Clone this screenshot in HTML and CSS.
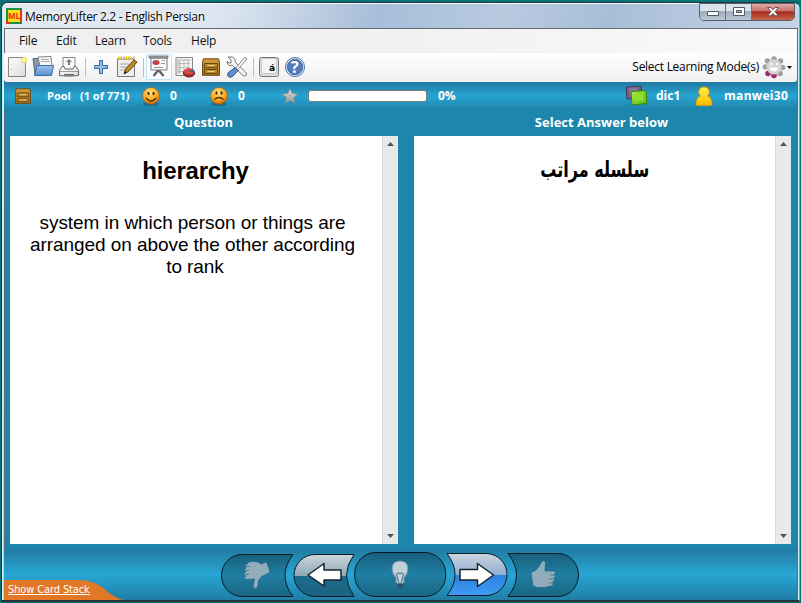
FILE: index.html
```html
<!DOCTYPE html>
<html lang="en">
<head>
<meta charset="utf-8">
<title>MemoryLifter 2.2 - English Persian</title>
<link rel="stylesheet" href="styles.css">
</head>
<body>
<svg class="defs" width="0" height="0">
<defs>
<linearGradient id="paper" x2="1" y2="1"><stop stop-color="#fff"/><stop offset="1" stop-color="#dcdcdc"/></linearGradient>
<linearGradient id="folder" x2="0" y2="1"><stop stop-color="#9cc4ec"/><stop offset="1" stop-color="#5b8fce"/></linearGradient>
<radialGradient id="face" cx=".45" cy=".3" r=".75"><stop stop-color="#ffe486"/><stop offset=".6" stop-color="#fba51c"/><stop offset="1" stop-color="#b84e00"/></radialGradient>
<linearGradient id="wood" x2="0" y2="1"><stop stop-color="#d39a3a"/><stop offset="1" stop-color="#b07816"/></linearGradient>
<linearGradient id="dark" x2="0" y2="1"><stop stop-color="#185f7d"/><stop offset=".5" stop-color="#1f7fa2"/><stop offset="1" stop-color="#1a6582"/></linearGradient>
<linearGradient id="back" x2="0" y2="1"><stop stop-color="#cdd5da"/><stop offset=".5" stop-color="#8fa9b7"/><stop offset=".51" stop-color="#1c6c8c"/><stop offset="1" stop-color="#1b6380"/></linearGradient>
<linearGradient id="fwd" x2="0" y2="1"><stop stop-color="#ccd5df"/><stop offset=".5" stop-color="#8faed4"/><stop offset=".51" stop-color="#2b80dc"/><stop offset="1" stop-color="#3f9cf5"/></linearGradient>
<linearGradient id="gold" x2="0" y2="1"><stop stop-color="#fff04a"/><stop offset="1" stop-color="#fcb900"/></linearGradient>
<linearGradient id="star" x2="0" y2="1"><stop stop-color="#ddd"/><stop offset="1" stop-color="#989898"/></linearGradient>
<linearGradient id="green" x2="1" y2="1"><stop stop-color="#b0ee40"/><stop offset="1" stop-color="#54b616"/></linearGradient>
<symbol id="drawer" viewBox="0 0 18 18"><path d="M1.500.8h15l1 3.500v13H.5v-13z" fill="url(#wood)" stroke="#684711"/><path d="M2.500 5.500h13v4.300h-13zM2.500 11.500h13v4h-13z" fill="#bd872b" stroke="#684711"/><path d="M6 6.500v1h6v-1M6 12.500v1h6v-1" fill="none" stroke="#e8cf7c" stroke-width="1"/></symbol>
</defs></svg>
<div class="window">
  <header class="titlebar">
    <svg class="logo" width="16" height="16"><path fill="#ef2b1b" d="M0 0h16v16H0z"/><path fill="#159447" d="M0 0h16v2H2v11H0zM3 14h12v2H3z"/><path fill="#ffdc18" d="M2 2h12v12H2z"/><text x="2" y="10.500" textLength="12" lengthAdjust="spacingAndGlyphs" class="logo-text">ML</text></svg>
    <span class="title">MemoryLifter 2.2 - English Persian</span>
    <div class="controls">
      <span class="min"><svg width="12" height="6"><path d="M.5.5h11v4H.5z" fill="#fff" stroke="#515961"/></svg></span>
      <span class="max"><svg width="12" height="10"><path d="M.5.5h11v8H.5z" fill="#fff" stroke="#515961"/><path d="M3.500 3.500h5v2h-5z" fill="#a4b0be" stroke="#515961"/></svg></span>
      <span class="close"><svg width="12" height="10"><path d="M.6.5h3.300L6 2.800 8.100.5h3.300L8 4.700l3.500 4.100H8.200L6 6.600 3.800 8.800H.5L4 4.700z" fill="#fff" stroke="#5b4446" stroke-width=".9"/></svg></span>
    </div>
  </header>
  <main class="client">
    <nav class="menu"><span class="m1">File</span><span class="m2">Edit</span><span class="m3">Learn</span><span class="m4">Tools</span><span class="m5">Help</span></nav>
    <div class="toolbar">
      <svg width="26" height="29" viewBox="4 53 26 29"><path d="M8.500 57.500h17v19h-17z" fill="url(#paper)" stroke="#858585"/><path d="M11 59v14" stroke="#bbb" stroke-dasharray="1 4"/><circle cx="24" cy="60" r="2.400" fill="#fffad5" stroke="#f4e55b" stroke-width="1.400"/></svg>
      <svg width="27" height="29" viewBox="30 53 27 29"><path d="M33 58.500h8l2 3h5v13H35z" fill="#8996a4" stroke="#5d6b79"/><path d="m38 57 13-.5 1 10H40z" fill="#f7f7f7" stroke="#858585"/><path d="M41 59.500h8M41 61.500h9" stroke="#aaa"/><path d="M37 65.500h16.500l-2 10H34.500z" fill="url(#folder)" stroke="#376eab"/></svg>
      <svg width="27" height="29" viewBox="57 53 27 29"><path d="M63 57.500h12v12H63z" fill="#fafafa" stroke="#888"/><path d="m69 59 3 3h-2v3h-2v-3h-2z" fill="#777"/><path d="m62 66.500-2.500 4v5q9 1.500 19 0v-5l-2.500-4h-2l-1 2.500h-8l-1-2.500z" fill="url(#paper)" stroke="#666"/><path d="M60 71.500h18" stroke="#999"/><path d="M64 74h10v1.500H64z" fill="#666"/></svg>
      <svg width="29" height="29" viewBox="84 53 29 29"><path d="M85.500 58v19" stroke="#bdbdbd"/><path d="M99.500 60.500h3v5h5v3h-5v5h-3v-5h-5v-3h5z" fill="#94bce5" stroke="#2f67a9"/></svg>
      <svg width="29" height="29" viewBox="113 53 29 29"><path d="M117.500 59h17v17.500h-17z" fill="#efeeea" stroke="#777"/><path d="M118 58h17" stroke="#e5bd17" stroke-width="3" stroke-dasharray="1.500 1"/><path d="M120 64h9M120 67h7M120 70h5" stroke="#aaa"/><path d="m124 74 1.500-5 8.500-9 3 2-8.500 9.500z" fill="#c48c20" stroke="#5e4217"/><path d="m124 74 1-3 2 1.500z" fill="#222"/></svg>
      <svg width="31" height="29" viewBox="142 53 31 29"><path d="M143.500 58v19" stroke="#bdbdbd"/><path d="M146.500 54.500h25v25h-25z" fill="#f9fcff" stroke="#bfe4fa"/><path d="m158.500 70-5 6M158.500 70l5 6" stroke="#606060" stroke-width="2.300"/><path d="M151 58h16v12h-16z" fill="#fafafa" stroke="#777"/><path d="M149 56h19v2h-19z" fill="#a9a9a9" stroke="#606060" stroke-width=".7"/><ellipse cx="156" cy="62.500" rx="3.500" ry="2.500" fill="#d53b35"/><path d="M156 62.500v-2.500q-3 0-4 2.500z" fill="#477bc0"/><path d="M162 60.500h3M161 63.500h4M154 67.500h9" stroke="#999"/></svg>
      <svg width="27" height="29" viewBox="173 53 27 29"><path d="M176 57.500h16.500v18H176z" fill="#f3f3f3" stroke="#898989"/><path d="M177 59h3v15h-3zM177 59h14v2h-14z" fill="#d2d2d2"/><path d="M180 60v13M184 60v13M188 60v13M178 63.500h12M178 67.500h12M178 71.500h12" stroke="#bbb"/><ellipse cx="189" cy="73" rx="5.700" ry="4" fill="#a52426" stroke="#69201e"/><ellipse cx="189" cy="71.500" rx="5.300" ry="3.200" fill="#d74b43"/><path d="m189 71.500 4-2.500q2 2 1 4z" fill="#386a98"/></svg>
      <svg width="25" height="29" viewBox="200 53 25 29"><use href="#drawer" x="202" y="57.500" width="18" height="19"/></svg>
      <svg width="27" height="29" viewBox="225 53 27 29"><path d="m228 57 3 3v3h-2l-2-2q0 4 3 5l2-1 10.500 10q2 2 3.500.5t-.5-3.500L235 62q1-4-3-5z" fill="#f6f6f6" stroke="#777"/><path d="m245 57 2 2-10 11-1.500-1.500z" fill="#fff" stroke="#858585"/><path d="m235 67.500 3 3-5.500 6q-2 1.500-4 0t0-4z" fill="#5c91cd" stroke="#244b80"/></svg>
      <svg width="30" height="29" viewBox="252 53 30 29"><path d="M253.500 58v19" stroke="#bdbdbd"/><rect x="259.500" y="57.500" width="19" height="19" rx="2" fill="#ddd" stroke="#777"/><rect x="261.500" y="58.500" width="15" height="15" rx="2" fill="#f5f5f3" stroke="#c5c5c5"/><text x="269" y="71" class="key">á</text></svg>
      <svg width="26" height="29" viewBox="282 53 26 29"><circle cx="295" cy="67" r="9.500" fill="#eef3fa" stroke="#456ba4"/><circle cx="295" cy="67" r="7.700" fill="#537cb9" stroke="#234f91" stroke-width=".7"/><text x="291" y="72.500" class="question-mark">?</text></svg>
      <span class="mode">Select Learning Mode(s)</span>
      <svg class="gear" width="34" height="29" viewBox="762 53 34 29"><g fill="#a2a0a2"><circle cx="774" cy="59" r="2.800"/><circle cx="780.500" cy="61" r="2.800"/><circle cx="782.500" cy="67.500" r="2.800"/><circle cx="780" cy="73.500" r="2.800"/><circle cx="767.500" cy="61" r="2.800"/><circle cx="765.500" cy="67" r="2.800"/></g><g fill="#a0286c"><circle cx="768" cy="73.500" r="2.800"/><circle cx="774" cy="75.500" r="2.800"/></g><circle cx="774" cy="67" r="7.500" fill="#d6d4d6"/><path d="M771.500 63v2M777 63v2" stroke="#fff" stroke-width="2"/><path d="M769.500 67.500h9q-1 4-4.500 4t-4.500-4" fill="#fff"/><path d="M787 66h5l-2.500 3z" fill="#111"/></svg>
    </div>
    <div class="status">
      <svg width="40" height="28" viewBox="4 82 40 28"><use href="#drawer" x="15" y="88" width="16" height="16"/></svg>
      <span class="pool">Pool</span><span class="count">(1 of 771)</span>
      <svg width="32" height="28" viewBox="138 82 32 28"><ellipse cx="151" cy="104" rx="8" ry="2" fill="#155875" opacity=".6"/><circle cx="151" cy="96" r="8.500" fill="url(#face)" stroke="#9b5315" stroke-width=".5"/><path d="M148.500 92v3M153.500 92v3" stroke="#3a2609" stroke-width="1.800"/><path d="M146 98q5 6 10 0" fill="none" stroke="#553006" stroke-width="1.500"/></svg>
      <span class="good">0</span>
      <svg width="32" height="28" viewBox="206 82 32 28"><ellipse cx="219" cy="104" rx="8" ry="2" fill="#155875" opacity=".6"/><circle cx="219" cy="96" r="8.500" fill="url(#face)" stroke="#9b5315" stroke-width=".5"/><path d="M216.500 91.500v3M221.500 91.500v3" stroke="#3a2609" stroke-width="1.800"/><path d="M214.500 99.500q4.500-4 9 0" fill="none" stroke="#553006" stroke-width="1.500"/></svg>
      <span class="bad">0</span>
      <svg width="26" height="28" viewBox="281 82 26 28"><path d="m290 88.500 2.200 4.800 5.500.6-4 3.700 1.100 5.500-4.800-2.600-4.800 2.600 1.100-5.500-4-3.700 5.500-.6z" fill="url(#star)" stroke="#858585" stroke-width=".7"/></svg>
      <div class="progress"></div><span class="percent">0%</span>
      <svg class="cards" width="26" height="28" viewBox="624 82 26 28"><path d="m626 87 15-1 1 12-15 1z" fill="#765b87" stroke="#403d51"/><path d="m629 88 9-.5.500 8-9 .5z" fill="#8a779b"/><path d="m631 91.500 15-1 1 13-15 1.500z" fill="url(#green)" stroke="#38820b"/><path d="m634 94 9-.5.500 7-9 .5z" fill="#8edf30"/></svg>
      <span class="deck">dic1</span>
      <svg width="24" height="28" viewBox="694 82 24 28"><path d="M700.500 96C697 92 699 87 704 87s7 5 3.500 9q4 1 4.500 8 0 1.500-1.500 1.500h-13q-1.500 0-1.500-1.500.500-7 4.500-8z" fill="url(#gold)" stroke="#ec9900"/></svg>
      <span class="user">manwei30</span>
    </div>
    <section class="workspace">
      <div class="column question"><h2><span>Question</span></h2><div class="panel"><article><h1><span>hierarchy</span></h1><p><span>system in which person or things are</span><span>arranged on above the other according</span><span>to rank</span></p></article><aside><svg width="7" height="4"><path d="M0 4h7L3.500 0z"/></svg><svg width="7" height="4"><path d="M0 0h7L3.500 4z"/></svg></aside></div></div>
      <div class="column answer"><h2><span>Select Answer below</span></h2><div class="panel"><article><div class="persian" lang="fa" dir="rtl"><span>سلسله مراتب</span></div></article><aside><svg width="7" height="4"><path d="M0 4h7L3.500 0z"/></svg><svg width="7" height="4"><path d="M0 0h7L3.500 4z"/></svg></aside></div></div>
    </section>
    <footer class="bottom">
      <div class="stack"><svg width="121" height="20"><path d="M0 0h75q13 0 23 7 13 12 22 13H0z" fill="#e07828"/></svg><a>Show Card Stack</a></div>
      <div class="navigation">
        <svg width="73" height="51" viewBox="221 549 73 51"><path d="M242 554.500h51q-16 21 0 42h-51a20.500 21 0 0 1 0-42z" fill="url(#dark)" stroke="#071c25"/><path d="M247.500 562.500q5-1.500 10-.5l4 2 5-2q2 5 3.500 10l-4 2.500-4.500 2-3 4-1 7q-3 2-4.500-.5l1.500-8-8 .5q-4-1-.5-3.500-3.500-1.500-.5-4-2.500-2 .5-4-2-2.500 1.500-4z" fill="#91adbc" stroke="#24647f" stroke-width=".7"/><path d="M246 566.500h4M245 570.500h4M246 574.500h3" stroke="#36718b" stroke-width=".8"/></svg>
        <svg width="61" height="51" viewBox="294 549 61 51"><path d="M315 554.500h39q-15 21 0 42h-39a21 21 0 0 1 0-42z" fill="url(#back)" stroke="#071c25"/><path d="m308 575 16-11.500v6.500h17v10h-17v6z" fill="#fff" stroke="#15252d" stroke-width="1.500" stroke-linejoin="round"/></svg>
        <svg width="92" height="51" viewBox="355 549 92 51"><rect x="354.700" y="552.500" width="91" height="44" rx="21" fill="url(#dark)" stroke="#051b23"/><path d="M396 583v-5q-4-5-4-9 0-8 8-8t8 8q0 4-4 9v5z" fill="#c0d1dc" stroke="#6b91a4"/><path d="m398.500 582-2-8q1-3 3.500 0 2.500-3 3.500 0l-2 8" fill="none" stroke="#41677a"/><path d="M397 584h6.500v2l-2 2h-2.500l-2-2z" fill="#315562"/></svg>
        <svg width="61" height="51" viewBox="447 549 61 51"><path d="M447 553.500h39a21 21 0 0 1 0 42h-39q16-21 0-42z" fill="url(#fwd)" stroke="#071c25"/><path d="m493.500 575-16-11.500v6h-17.500v10.500h17.500v6.500z" fill="#fff" stroke="#15252d" stroke-width="1.500" stroke-linejoin="round"/></svg>
        <svg width="73" height="51" viewBox="508 549 73 51"><path d="M508 553.500h50a20.500 21.500 0 0 1 0 43h-50q17-21.500 0-43z" fill="url(#dark)" stroke="#071c25"/><path d="M531 572q6 0 10.500-10 3-3 4 1l-.5 8h9q3 1.500 0 3.500 2.500 2 0 4 1.500 2-1.500 4 1.500 3-1.500 3.500l-7 1.500q-7 .5-11-1.500z" fill="#91adbc" stroke="#24647f" stroke-width=".7"/><path d="M550 575h4M549 579h4M549 583h3" stroke="#36718b" stroke-width=".8"/></svg>
      </div>
    </footer>
  </main>
</div>
</body>
</html>
```
FILE: styles.css
```css
* { box-sizing: border-box; }
body { margin: 0; width: 801px; height: 603px; overflow: hidden; padding: 2px 1px 1px; background: #087374; }
.defs { display: block; position: absolute; }
svg { display: block; flex: none; overflow: visible; }
span, a { white-space: nowrap; }
.window { height: 600px; padding: 0 2px 1px; border: 1px solid #26343f; border-right-color: #34bce1; border-bottom: 2px solid #24333e; border-radius: 7px 7px 1px 1px; background: linear-gradient(#e5f1fa, #a5d5ef); box-shadow: inset 0 0 0 1px #d5eafa; }
.titlebar { display: flex; height: 25px; margin: 0 -2px; padding: 5px 5px 0 4px; border-radius: 6px 6px 0 0; background: linear-gradient(100deg, #e3e9f0 0, #dce5ef 28%, #a7bdd9 47%, #b7cae0 63%, #a9bdd8 76%, #c4d5e6); box-shadow: inset 0 1px #f4faff; }
.logo-text { font: bold 8px "Open Sans", sans-serif; fill: #df3110; }
.title { margin-left: 3px; color: #080808; font: 12px/17px "Open Sans", sans-serif; letter-spacing: -.32px; text-shadow: 0 0 5px white; }
.controls { display: flex; width: 96px; height: 18px; margin: -5px -1px 0 auto; border: 1px solid #59626c; border-radius: 0 0 5px 5px; overflow: hidden; }
.controls span { display: flex; width: 26px; align-items: center; justify-content: center; border-right: 1px solid #687583; background: linear-gradient(#dae2eb 45%, #9eabba 47%, #b9c8d8); }
.controls .close { flex: 1; border: 0; background: linear-gradient(#dfaaa5, #c97068 45%, #a7291b 48%, #c7664b); }
.min svg { margin-top: 4px; }
.client { width: 794px; height: 572px; border: 1px solid #626b74; border-bottom-color: #546977; background: #1d86ac; }
.menu { display: flex; height: 24px; background: linear-gradient(90deg, #efefef, #f1f1f1 50%, #fafafa); font: 12px/24px "Open Sans", sans-serif; color: #111; }
.menu span { letter-spacing: -.2px; }
.m1 { width: 37px; margin-left: 14px; }
.m2 { width: 39px; }
.m3 { width: 48px; }
.m4 { width: 48px; }
.toolbar { display: flex; height: 29px; margin-left: -1px; background: linear-gradient(#fff, #f0f0f0); border-radius: 0 0 3px 3px; }
.key { font: bold 9px "DejaVu Sans", sans-serif; }
.question-mark { font: bold 16px "Open Sans", sans-serif; fill: #fff; }
.mode { margin-left: auto; margin-right: 3px; font: 12px/28px "Open Sans", sans-serif; letter-spacing: -.28px; }
.gear { margin-right: 1px; }
.status { display: flex; height: 28px; margin-left: -1px; color: #fff; font: bold 12px/28px "Open Sans", sans-serif; background: linear-gradient(#207aa3, #27a5d2 50%, #1d82a9); }
.pool { width: 33px; margin-left: 3px; font-size: 11px; }
.count { width: 58px; font-size: 11px; }
.good, .bad { width: 36px; }
.bad { width: 43px; }
.progress { width: 119px; height: 12px; margin: 8px 11px 0 1px; border: 1px solid #817b7c; border-radius: 3px; background: white; }
.cards { margin-left: auto; }
.deck { width: 38px; margin-left: 6px; }
.user { width: 73px; margin-left: 6px; letter-spacing: .3px; }
.workspace { display: grid; grid-template-columns: 388px 377px; gap: 16px; height: 439px; padding: 0 5px 5px; }
.column { min-width: 0; }
h2 { margin: 0; height: 26px; padding-right: 2px; color: white; text-align: center; font: bold 13px/25px "Open Sans", sans-serif; }
.question h2 { padding-right: 1px; }
.panel { display: flex; height: 408px; background: white; }
.panel article { flex: 1; min-width: 0; text-align: center; padding-top: 20px; }
.panel aside { display: flex; width: 16px; flex-direction: column; align-items: center; justify-content: space-between; padding: 6px 0; background: #e9e9e9; border-left: 1px solid #d8d8d8; fill: #555; }
h1 { margin: 0; height: 56px; padding-right: 1px; font: bold 24px/30px "Liberation Sans", Arial, sans-serif; letter-spacing: -.2px; }
p { display: flex; margin: 0; width: 365px; flex-direction: column; align-items: center; font: 19px/22px "Liberation Sans", Arial, sans-serif; letter-spacing: -.07px; }
p span:last-child { padding-left: 5px; }
.answer article { padding-top: 20px; }
.persian { font: bold 22px/28px "DejaVu Sans", sans-serif; }
.persian span { display: inline-block; transform: scaleX(.73); }
.bottom { display: flex; height: 51px; margin-left: -1px; align-items: flex-end; background: linear-gradient(#217ba1, #28a6d4 50%, #207da5); }
.stack { display: grid; width: 217px; height: 20px; }
.stack > * { grid-area: 1 / 1; }
.stack a { padding-left: 4px; color: white; font: 11px/20px "DejaVu Sans Condensed", "DejaVu Sans", sans-serif; text-decoration: underline; letter-spacing: -.12px; }
.navigation { display: flex; margin-left: -.5px; }
```
